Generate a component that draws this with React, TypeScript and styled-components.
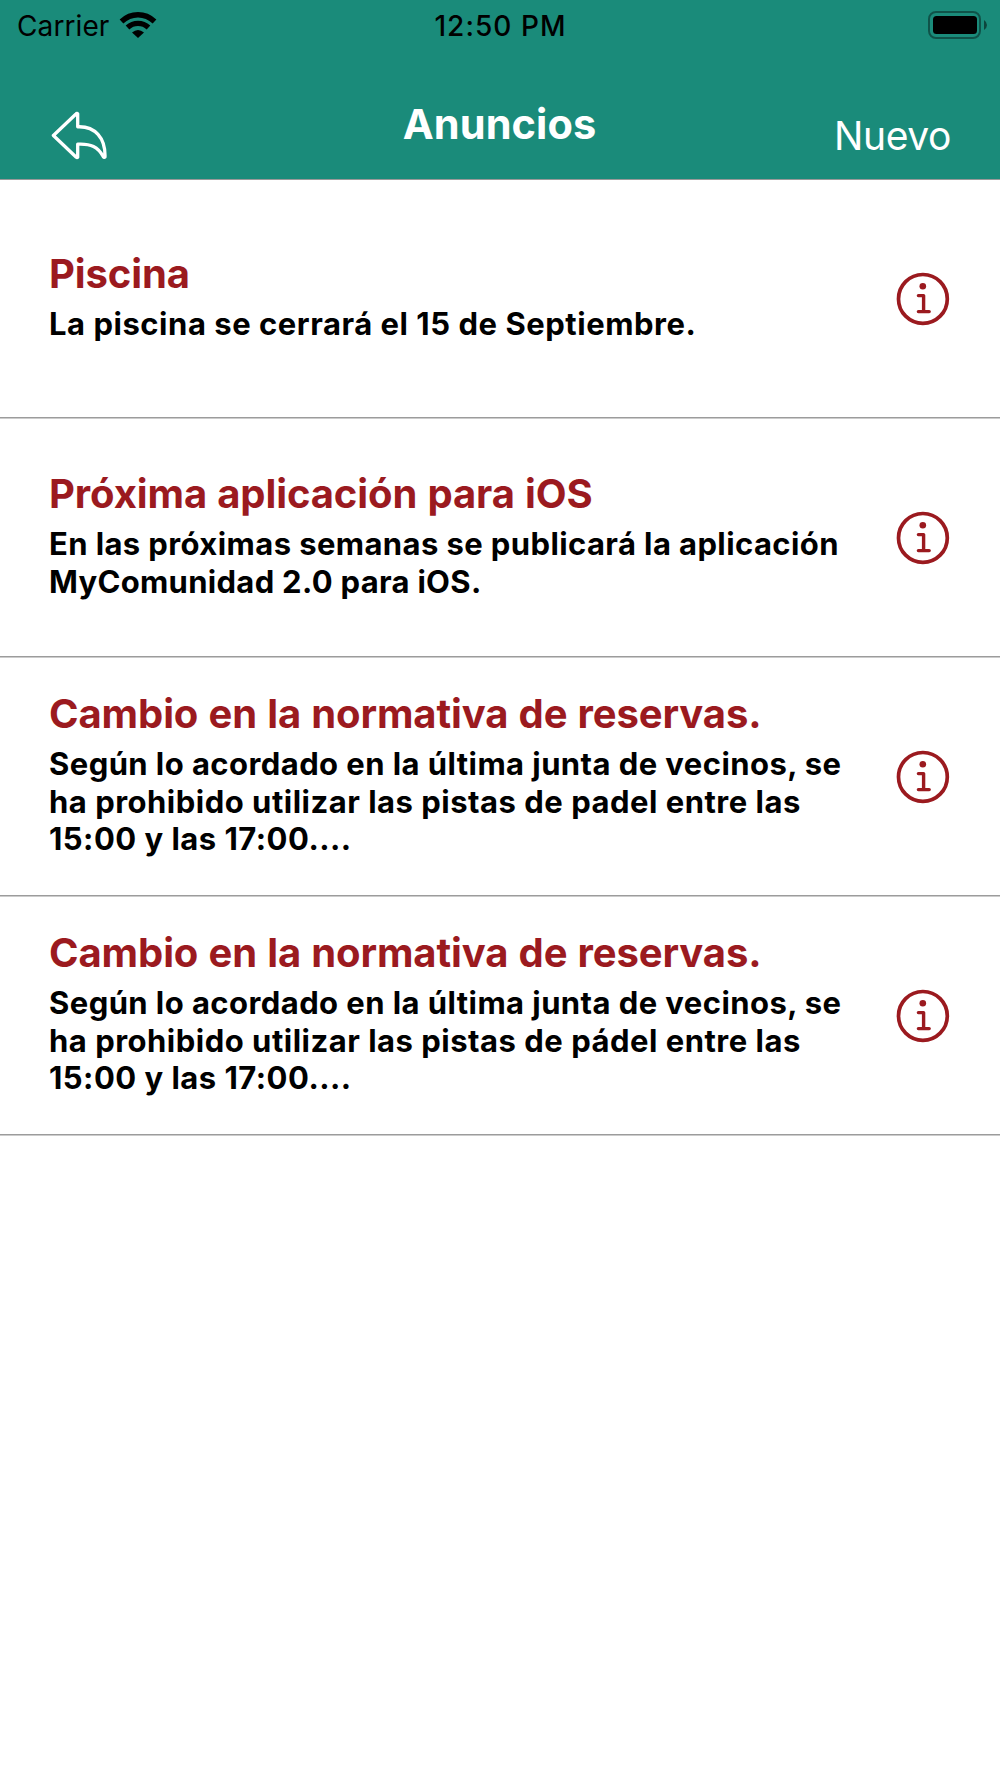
import React from "react";
import styled, { createGlobalStyle } from "styled-components";

const Global = createGlobalStyle`
  * { box-sizing: border-box; }
  body { margin: 0; background: #fff; font-family: Inter, "Liberation Sans", sans-serif; }
`;

const Screen = styled.main`
  width: 1000px;
  height: 1778px;
  display: flex;
  flex-direction: column;
  background: #fff;
`;

const Header = styled.header`
  height: 180px;
  background: #1a8b7a;
  border-bottom: 1px solid #999;
`;

const StatusBar = styled.div`
  height: 50px;
  display: grid;
  grid-template-columns: 1fr auto 1fr;
  align-items: center;
  padding: 0 13px 0 17px;
  color: #000;
`;

const Carrier = styled.div`
  display: flex;
  align-items: center;
  gap: 10px;
  font-size: 28px;
  letter-spacing: 0.1px;
  line-height: 50px;
  span { padding-top: 1px; }
  svg { margin-bottom: 2px; }
`;

const Clock = styled.time`
  padding: 1px 3px 0 0;
  font-size: 28px;
  font-weight: 500;
  letter-spacing: 1.05px;
  line-height: 50px;
`;

const Battery = styled.svg`
  justify-self: end;
  margin-bottom: 2px;
`;

const NavBar = styled.nav`
  height: 129px;
  display: grid;
  grid-template-columns: 1fr auto 1fr;
  align-items: start;
  padding: 0 49px 0 51px;
  color: #fff;
`;

const NavButton = styled.button<{ $end?: boolean }>`
  border: 0;
  padding: 0;
  margin-top: ${(p) => (p.$end ? 62 : 61)}px;
  background: none;
  color: inherit;
  font: 400 39px/48px Inter, sans-serif;
  letter-spacing: -0.4px;
  justify-self: ${(p) => (p.$end ? "end" : "start")};
  svg { display: block; }
`;

const Heading = styled.h1`
  margin: 49px 0 0;
  padding-right: 3px;
  font-size: 41.5px;
  letter-spacing: 0.1px;
  line-height: 50px;
  font-weight: 700;
`;

const List = styled.ul`
  margin: 0;
  padding: 0;
  list-style: none;
`;

const Row = styled.li`
  height: 239px;
  display: grid;
  grid-template-columns: 1fr 54px;
  align-items: center;
  padding: 0 50px 0 49px;
  border-bottom: 1px solid #ccc;
  box-shadow: inset 0 -1px #9c9c9c;
`;

const Title = styled.h2`
  margin: 0 0 6px;
  font-size: 40px;
  line-height: 50px;
  font-weight: 700;
  letter-spacing: -0.1px;
  word-spacing: 0.8px;
  color: #9b1a1f;
`;

const Body = styled.p`
  margin: 0;
  padding-bottom: 7px;
  font-size: 31px;
  line-height: 37.5px;
  font-weight: 700;
  color: #000;
`;

const Line = styled.span<{ $tracking: number }>`
  display: block;
  white-space: nowrap;
  letter-spacing: ${(p) => p.$tracking}px;
`;

const InfoIcon = () => (
  <svg width="54" height="54" viewBox="0 0 54 54" fill="none" stroke="#9b1a1f" strokeLinecap="round" strokeLinejoin="round">
    <circle cx="26.9" cy="26.9" r="24.4" strokeWidth="3.7" />
    <circle cx="26.8" cy="14.3" r="3.3" fill="#9b1a1f" stroke="none" />
    <path d="M22.4 23.6H27.6V39.6M22.4 39.6H33.2" strokeWidth="3.4" />
  </svg>
);

type Item = { title: string; lines: { text: string; tracking: number }[] };

const rules = (sport: string): Item => ({
  title: "Cambio en la normativa de reservas.",
  lines: [
    { text: "Según lo acordado en la última junta de vecinos, se", tracking: 0.43 },
    { text: `ha prohibido utilizar las pistas de ${sport} entre las`, tracking: 0.5 },
    { text: "15:00 y las 17:00....", tracking: 0.47 },
  ],
});

const items: Item[] = [
  {
    title: "Piscina",
    lines: [{ text: "La piscina se cerrará el 15 de Septiembre.", tracking: 0.53 }],
  },
  {
    title: "Próxima aplicación para iOS",
    lines: [
      { text: "En las próximas semanas se publicará la aplicación", tracking: 0.4 },
      { text: "MyComunidad 2.0 para iOS.", tracking: 0.3 },
    ],
  },
  rules("padel"),
  rules("pádel"),
];

export default function App() {
  return (
    <Screen>
      <Global />
      <Header>
        <StatusBar>
          <Carrier>
            <span>Carrier</span>
            <svg width="38" height="28" viewBox="0 0 38 28" fill="none" stroke="#000" strokeWidth="5.4">
              <path d="M2.5 10.5C12 1.5 26 1.5 35.5 10.5" />
              <path d="M8.5 16.5C14.5 11 23.5 11 29.5 16.5" />
              <path d="M13 21.5Q19 16.5 25 21.5L19 27Z" fill="#000" stroke="none" />
            </svg>
          </Carrier>
          <Clock>12:50 PM</Clock>
          <Battery width="59" height="28" viewBox="0 0 59 28">
            <rect x="1" y="1" width="51" height="26" rx="7" fill="none" stroke="#000" strokeOpacity=".4" strokeWidth="2" />
            <rect x="5" y="5" width="44" height="18" rx="3.5" />
            <path d="M56 9Q59 11 59 14T56 19Z" fillOpacity=".5" />
          </Battery>
        </StatusBar>
        <NavBar>
          <NavButton aria-label="Volver">
            <svg width="56" height="49" viewBox="0 0 56 49" fill="none" stroke="#fff" strokeWidth="3.3" strokeLinejoin="round">
              <path d="M26.7 2.8V15.8C44 15 54.5 27 54 46Q53.2 47 52.2 45.5C47 36 40 32.5 26.7 33.2V46.2Q26 46.8 25 46L2.4 24.5L25 3Q26 2 26.7 2.8Z" />
            </svg>
          </NavButton>
          <Heading>Anuncios</Heading>
          <NavButton $end>Nuevo</NavButton>
        </NavBar>
      </Header>
      <List>
        {items.map((item, i) => (
          <Row key={i}>
            <div>
              <Title>{item.title}</Title>
              <Body>
                {item.lines.map((line) => (
                  <Line key={line.text} $tracking={line.tracking}>{line.text}</Line>
                ))}
              </Body>
            </div>
            <InfoIcon />
          </Row>
        ))}
      </List>
    </Screen>
  );
}
